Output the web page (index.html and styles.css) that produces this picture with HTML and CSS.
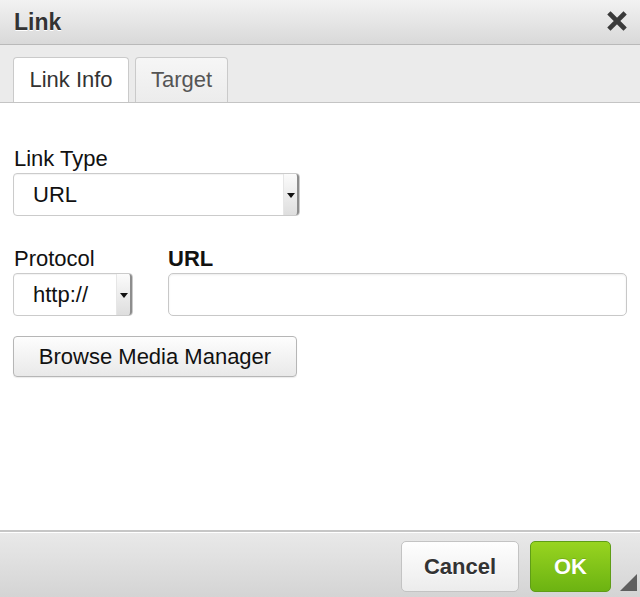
FILE: index.html
```html
<!DOCTYPE html>
<html>
<head>
<meta charset="utf-8">
<link rel="stylesheet" href="styles.css">
</head>
<body>
<div class="dialog">
  <div class="titlebar">
    <span class="title">Link</span>
    <svg class="close" width="20" height="20" viewBox="0 0 20 20"><path d="M3.5 3.5 L16.5 16.5 M16.5 3.5 L3.5 16.5" stroke="#3a3a3a" stroke-width="4.6" stroke-linecap="square"/></svg>
  </div>
  <div class="tabbar">
    <div class="tab active">Link Info</div>
    <div class="tab">Target</div>
  </div>
  <div class="content">
    <div class="label">Link Type</div>
    <div class="select wide"><span class="sel-text">URL</span><span class="arrow"></span></div>
    <div class="row">
      <div class="col proto">
        <div class="label">Protocol</div>
        <div class="select"><span class="sel-text">http://</span><span class="arrow"></span></div>
      </div>
      <div class="col url">
        <div class="label bold">URL</div>
        <div class="input"></div>
      </div>
    </div>
    <div class="btn browse">Browse Media Manager</div>
  </div>
  <div class="footer">
    <div class="fbtn cancel">Cancel</div>
    <div class="fbtn ok">OK</div>
    <span class="resize"></span>
  </div>
</div>
</body>
</html>
```
FILE: styles.css
```css
html, body { margin: 0; padding: 0; }
body { width: 640px; height: 597px; overflow: hidden; font-family: "Liberation Sans", Arial, sans-serif; background: #fff; }
.dialog { display: flex; flex-direction: column; height: 597px; position: relative; }
.titlebar {
  height: 44px; border-bottom: 1px solid #b9b9b9;
  background: linear-gradient(#f2f2f2, #d9d9d9);
  display: flex; align-items: center; justify-content: space-between;
  padding: 0 14px 0 14px; box-sizing: content-box;
}
.title { font-weight: bold; font-size: 23px; color: #333; text-shadow: 0 1px 0 #fff; margin-top: 1px; }
.close { margin-right: -1px; margin-top: -3px; }
.tabbar {
  height: 45px; padding: 12px 0 0 13px; background: #ebebeb;
  border-bottom: 1px solid #c4c4c4; display: flex; gap: 6px;
}
.tab {
  height: 44px; line-height: 44px; font-size: 22px; color: #555;
  border: 1px solid #cacaca; border-bottom: none; border-radius: 4px 4px 0 0;
  background: linear-gradient(#f6f6f6, #ececec); text-align: center;
  width: 91px;
}
.tab.active { background: #fff; color: #333; width: 114px; }
.content { flex: 1; padding: 43px 13px 0 13px; background: #fff; }
.label { font-size: 22px; line-height: 26px; color: #111; margin-bottom: 1px; padding-left: 1px; }
.label.bold { font-weight: bold; padding-left: 0; }
.select {
  height: 41px; border: 1px solid #cbcbcb; border-radius: 4px; background: #fff;
  display: flex; align-items: center; box-shadow: inset 0 1px 1px rgba(0,0,0,0.05);
  box-sizing: content-box;
}
.select.wide { width: 285px; }
.sel-text { flex: 1; font-size: 22px; color: #111; padding-left: 19px; }
.arrow {
  width: 16px; height: 41px; align-self: stretch; position: relative;
  background: linear-gradient(#fbfbfb, #dedede); border-right: 2px solid #8d8d8d;
  border-radius: 0 3px 3px 0; box-sizing: border-box; border-left: 1px solid #e6e6e6;
}
.arrow::after {
  content: ""; position: absolute; left: 3px; top: 19px;
  border-left: 4px solid transparent; border-right: 4px solid transparent; border-top: 5px solid #111;
}
.row { display: flex; gap: 35px; margin-top: 30px; }
.proto { width: 120px; }
.proto .select { width: 118px; }
.url { flex: 1; }
.input {
  height: 41px; border: 1px solid #c8c8c8; border-radius: 5px; background: #fff;
  box-shadow: inset 0 1px 2px rgba(0,0,0,0.08);
}
.btn.browse {
  margin-top: 20px; width: 282px; height: 39px; line-height: 39px;
  border: 1px solid #b6b6b6; border-radius: 4px; text-align: center;
  font-size: 22px; color: #111; background: linear-gradient(#fdfdfd, #e9e9e9);
  box-shadow: 0 1px 1px rgba(0,0,0,0.08);
}
.footer {
  height: 56px; border-top: 2px solid #c6c6c6; box-shadow: inset 0 1px 0 #fff;
  background: linear-gradient(#e9e9e9, #d4d4d4);
  display: flex; justify-content: flex-end; align-items: flex-start; gap: 11px;
  padding: 9px 29px 0 0; position: relative;
}
.fbtn {
  height: 49px; line-height: 49px; border-radius: 5px; text-align: center;
  font-size: 22px; font-weight: bold;
}
.cancel {
  width: 116px; border: 1px solid #c3c3c3; color: #333;
  background: linear-gradient(#fefefe, #ececec); text-shadow: 0 1px 0 #fff;
}
.ok {
  width: 79px; border: 1px solid #5f9d17; color: #fff;
  background: linear-gradient(#98d420, #6cb312); text-shadow: 0 -1px 0 rgba(0,0,0,0.15);
}
.resize {
  position: absolute; right: 3px; bottom: 6px; width: 0; height: 0;
  border-left: 17px solid transparent; border-bottom: 17px solid #5e5e5e;
}
```
